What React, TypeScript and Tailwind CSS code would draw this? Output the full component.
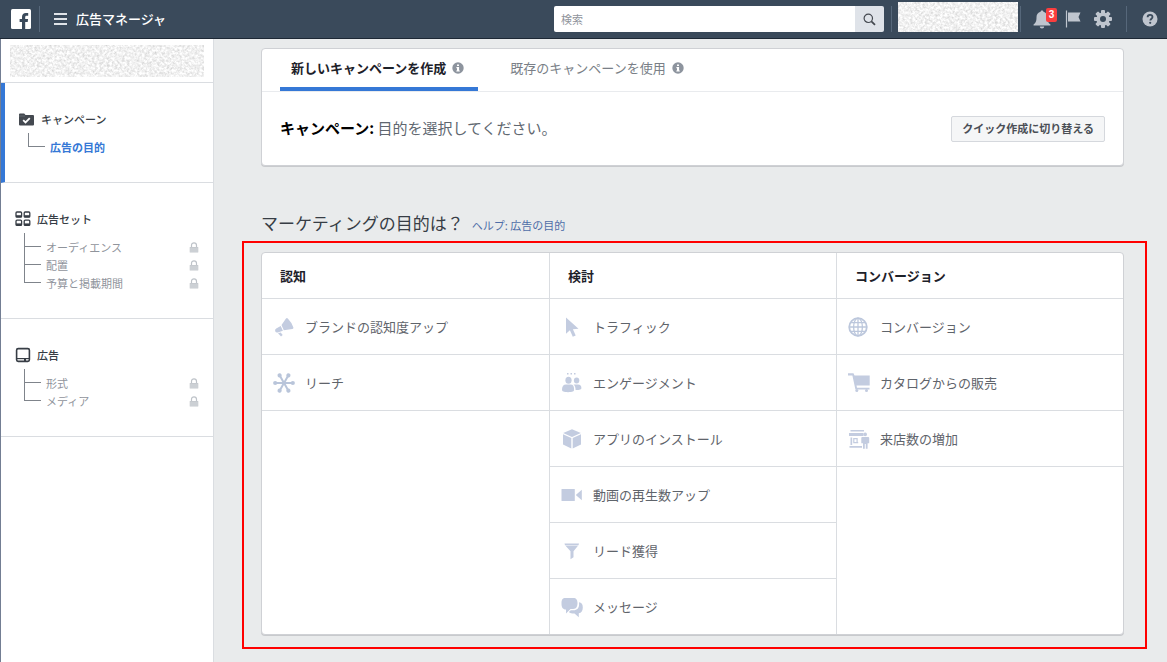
import React, { ReactNode } from 'react';

type SidebarItem = { label: string; locked?: boolean; active?: boolean };

type Objective = { label: string; icon: ReactNode };

const FacebookLogo = () => (
    <svg width="20" height="20" viewBox="0 0 20 20" aria-hidden="true">
        <rect width="20" height="20" rx="1.5" fill="#fff" />
        <path
            d="M11 20v-7H8.6v-2.9H11V8c0-2.6 1.5-4 3.9-4h2.3v2.8h-1.5c-1.2 0-1.5.6-1.5 1.5v1.8h2.9l-.4 2.9h-2.5v7z"
            fill="#3a4a5b"
        />
    </svg>
);

// Grainy block that covers private account names
const Redacted = ({ id, className }: { id: string; className: string }) => (
    <svg className={className} aria-hidden="true">
        <filter id={id} x="0" y="0" width="100%" height="100%">
            <feTurbulence type="fractalNoise" baseFrequency="0.4" numOctaves="3" seed="7" />
            <feColorMatrix type="matrix" values="-0.6 0 0 0 1.18  -0.6 0 0 0 1.18  -0.6 0 0 0 1.18  0 0 0 0 1" />
        </filter>
        <rect width="100%" height="100%" fill="#ececec" filter={`url(#${id})`} />
    </svg>
);

const InfoIcon = () => (
    <svg width="12" height="12" viewBox="0 0 12 12" aria-hidden="true">
        <circle cx="6" cy="6" r="5.7" fill="#8d949e" />
        <path d="M5 2.4h2v1.7H5zM4.4 5h2.7v3.4h.7v1.2H4.3V8.4H5V6.2h-.6z" fill="#fff" />
    </svg>
);

const LockIcon = () => (
    <svg width="10" height="11" viewBox="0 0 10 11" aria-hidden="true">
        <path d="M2.5 5.5V3.2a2.5 2.4 0 0 1 5 0v2.3" fill="none" stroke="#bec3c9" strokeWidth="1.2" />
        <rect x="0.7" y="5" width="8.6" height="5.6" rx="0.6" fill="#c5c9ce" />
        <path d="M1 7h8M1 9h8" stroke="#dadde1" strokeWidth="0.7" />
    </svg>
);

const FolderIcon = () => (
    <svg width="16" height="13" viewBox="0 0 16 13" aria-hidden="true">
        <path d="M0 1.5Q0 .4 1 .4h4.2l1.3 1.5H14q1 0 1 1V11.6q0 1-1 1H1q-1 0-1-1z" fill="#444950" />
        <path d="M0 3h6" stroke="#777c83" strokeWidth="0.6" />
        <path d="M4.2 7.2l2.3 2.2 4.3-4.3" fill="none" stroke="#fff" strokeWidth="1.8" />
    </svg>
);

const AdSetIcon = () => (
    <svg width="16" height="16" viewBox="0 0 16 16" fill="none" stroke="#373d45" strokeWidth="1.3" aria-hidden="true">
        {[[1, 1], [9.2, 1], [1, 9.2], [9.2, 9.2]].map(([x, y]) => (
            <g key={`${x}-${y}`}>
                <rect x={x} y={y} width="5.6" height="5.2" rx="1" />
                <path d={`M${x} ${y + 4.2}h5.6`} strokeWidth="2" />
            </g>
        ))}
    </svg>
);

const AdIcon = () => (
    <svg width="16" height="16" viewBox="0 0 16 16" fill="none" stroke="#373d45" aria-hidden="true">
        <rect x="1.6" y="1.6" width="12.8" height="12.8" rx="1.6" strokeWidth="1.6" />
        <path d="M1.6 11.6h12.8" strokeWidth="1.2" />
        <path d="M9 13h2" strokeWidth="2" />
    </svg>
);

const BellIcon = () => (
    <svg width="18" height="19" viewBox="0 0 18 19" fill="#bfc5ce" aria-hidden="true">
        <path d="M9 .4c.8 0 1.4.5 1.4 1.3 2.6.7 4.1 2.8 4.1 5.5 0 4.2.9 5.5 2.7 7.1.6.6.3 1.3-.5 1.3H1.3c-.8 0-1.1-.7-.5-1.3 1.8-1.6 2.7-2.9 2.7-7.1 0-2.7 1.5-4.8 4.1-5.5C7.6.9 8.2.4 9 .4z" />
        <path d="M6.8 16.5h4.4c0 1.2-.9 2-2.2 2s-2.2-.8-2.2-2z" />
    </svg>
);

const FlagIcon = () => (
    <svg width="16" height="18" viewBox="0 0 16 18" aria-hidden="true">
        <path d="M1.5.5v17" stroke="#bfc5ce" strokeWidth="1.2" />
        <path d="M3 2.5h12.5l-2 4.5 2 4.5H3z" fill="#bfc5ce" />
    </svg>
);

const GearIcon = () => (
    <svg width="18" height="18" viewBox="0 0 18 18" aria-hidden="true">
        <g fill="#bfc5ce">
            {[0, 45, 90, 135].map((angle) => (
                <rect key={angle} x="7" y="0" width="4" height="18" rx="1" transform={`rotate(${angle} 9 9)`} />
            ))}
            <circle cx="9" cy="9" r="6.6" />
        </g>
        <circle cx="9" cy="9" r="3" fill="#3a4a5b" />
    </svg>
);

const HelpIcon = () => (
    <svg width="16" height="16" viewBox="0 0 16 16" aria-hidden="true">
        <circle cx="8" cy="8" r="7.5" fill="#bfc5ce" />
        <path d="M5.6 6.3c0-1.5 1-2.4 2.4-2.4s2.5.8 2.5 2.2c0 1.6-2.2 1.7-2.2 3.5" fill="none" stroke="#3a4a5b" strokeWidth="1.8" />
        <circle cx="8.2" cy="11.8" r="1.1" fill="#3a4a5b" />
    </svg>
);

const SearchIcon = () => (
    <svg width="13" height="13" viewBox="0 0 13 13" fill="none" stroke="#444950" aria-hidden="true">
        <circle cx="5.3" cy="5.3" r="4.2" strokeWidth="1.2" />
        <path d="M8.4 8.4l3.6 3.4" strokeWidth="1.8" />
    </svg>
);

const ObjectiveIcon = ({ children }: { children: ReactNode }) => (
    <svg width="22" height="22" viewBox="0 0 22 22" fill="#c3cce0" className="shrink-0" aria-hidden="true">
        {children}
    </svg>
);

const REACH_ANGLES = [0, 60, 120, 180, 240, 300];

const columns: { title: string; objectives: Objective[] }[] = [
    {
        title: '認知',
        objectives: [
            {
                label: 'ブランドの認知度アップ',
                icon: (
                    <>
                        <path d="M8.5 9L13 2.5q.9-1.2 1.8 0 4 4 5.6 9 .2 1.4-1 1.5l-8.600 1.200z" />
                        <path d="M7.700 10l2.200 4.800-5 1.700q-2.100.4-2.700-1.200-.7-1.900 1-2.800z" />
                        <path d="M5 17.300l2.700-.9 2 2.700-1.700 1.400z" />
                    </>
                ),
            },
            {
                label: 'リーチ',
                icon: (
                    <g fill="#b9c5da">
                        {REACH_ANGLES.map((angle) => (
                            <g key={angle} transform={`rotate(${angle} 11 11)`}>
                                <path d="M11 10h8v2h-8z" />
                                <circle cx="19.8" cy="11" r="2.1" />
                            </g>
                        ))}
                    </g>
                ),
            },
        ],
    },
    {
        title: '検討',
        objectives: [
            {
                label: 'トラフィック',
                icon: <path d="M5 1.5v16.2l3.900-3.500 2.900 6.500 2.900-1.300-2.800-6.200 5.600-.4z" />,
            },
            {
                label: 'エンゲージメント',
                icon: (
                    <>
                        <path d="M6 1h1.500v1.500H6zM9.500 1H11v1.500H9.500zM13 1h1.500v1.500H13z" />
                        <ellipse cx="7.500" cy="8.200" rx="3.100" ry="3.500" />
                        <ellipse cx="15.600" cy="8.500" rx="2.700" ry="3" />
                        <path d="M1 17.800c0-3.600 1.500-5.300 4-5.300h4.600c2.500 0 3.500 1.700 3.500 5.300 0 1.700-1.500 2.400-6 2.400S1 19.500 1 17.800z" />
                        <path d="M12.500 12.500H17c2.400 0 3.400 1.500 3.400 3.500 0 1.500-1.300 2-5.800 2-.1-2.500-.5-4.300-2.100-5.500z" />
                    </>
                ),
            },
            {
                label: 'アプリのインストール',
                icon: (
                    <>
                        <path d="M11 1.2l8.800 3.700L11 9 2.200 4.900z" />
                        <path d="M2 6.200l8.300 3.900v10.500L2 16.400zM20 6.200l-8.300 3.900v10.500l8.300-4.200z" />
                    </>
                ),
            },
            {
                label: '動画の再生数アップ',
                icon: (
                    <>
                        <rect x="0.500" y="5" width="13.300" height="12" rx="0.500" />
                        <path d="M14.800 11l6-5.200v10.400z" />
                    </>
                ),
            },
            {
                label: 'リード獲得',
                icon: <path d="M3.500 3.500H18l-.5 1.700H4zM4.500 5.700H17l-4.500 5.600v6l-3 2v-8z" />,
            },
            {
                label: 'メッセージ',
                icon: (
                    <>
                        <path d="M4.500 2h7.700c3.200 0 4.300 2 4.300 5s-1.100 6-4.300 6H9.500L5 17.500v-3.900C1.600 13.200.5 11.500.5 7.500S1.500 2 4.500 2z" />
                        <path d="M18 6.300c2.600.4 3.800 2 3.800 5.200 0 3.500-1.400 5.300-4 5.700v4.100l-4.300-3.900h-2.200c-1.500 0-2.700-.4-3.500-1.300l2-1.900h2.700c3.600 0 5.600-2.300 5.600-6z" />
                    </>
                ),
            },
        ],
    },
    {
        title: 'コンバージョン',
        objectives: [
            {
                label: 'コンバージョン',
                icon: (
                    <g fill="none" stroke="#bcc7dc" strokeWidth="1.300">
                        <circle cx="10" cy="11" r="8.800" strokeWidth="1.800" />
                        <ellipse cx="10" cy="11" rx="4.400" ry="8.800" />
                        <path d="M10 2v18M1.500 11h17M2.500 6.700h15M2.500 15.300h15" />
                    </g>
                ),
            },
            {
                label: 'カタログからの販売',
                icon: (
                    <>
                        <path d="M0 1.200h5.500l1 2.300h15.200v10H8.500l.5 2.200h12.500v1.800H7.400L4.400 3.500H0z" />
                        <circle cx="8.800" cy="18.600" r="1.500" />
                        <circle cx="18.500" cy="18.600" r="1.500" />
                    </>
                ),
            },
            {
                label: '来店数の増加',
                icon: (
                    <>
                        <path d="M2.500 2H16v1.500H2.500zM1 5h14.500v3H1zM1.500 18h12.500v1.700H1.500z" />
                        <path d="M2.500 9.500h1.700V17H2.500zM5.200 10h4v1.200h-4zM5.200 11h1.200v3.500H5.200zM8.500 10h1.200v4.500H8.500zM5.200 14h5v1.300h-5z" />
                        <circle cx="17.200" cy="6.400" r="1.800" />
                        <path d="M14.200 9h6q1 0 1 1v5.200h-1.600v5.500h-1.800v-4.700h-1v4.700H15v-5.500h-1.700V10q0-1 .9-1z" />
                    </>
                ),
            },
        ],
    },
];

const SidebarSection = ({ title, icon, items, current }: {
    title: string;
    icon: ReactNode;
    items: SidebarItem[];
    current?: boolean;
}) => (
    <section
        className={`border-b border-[#dadde1] pt-[27px] pr-[14px] pb-[26px] pl-[14px] ${current ? 'border-l-4 border-l-[#3578d6]' : ''}`}
    >
        <h2 className="flex h-[18px] items-center gap-[6px] text-[11px] font-medium text-[#373d45]">
            {icon}
            {title}
        </h2>
        <div className="mt-[5px] ml-[9px] flex gap-[5px]">
            <div className="w-[17px]" aria-hidden="true">
                {items.map((item, i) => (
                    <div key={item.label} className={`border-b border-l border-[#7f848b] ${i === 0 ? 'h-[14px]' : 'h-[18px]'}`} />
                ))}
            </div>
            <ul className="mt-[5px] flex-1">
                {items.map((item) => (
                    <li key={item.label} className="flex h-[18px] items-center justify-between text-[11px]">
                        <a href="#" className={item.active ? 'font-bold text-[#3578d6]' : 'text-[#90949c]'}>
                            {item.label}
                        </a>
                        {item.locked && <LockIcon />}
                    </li>
                ))}
            </ul>
        </div>
    </section>
);

const Divider = ({ className }: { className: string }) => (
    <div className={`h-[26px] w-px shrink-0 bg-[#56677a] ${className}`} />
);

const TopBar = () => (
    <header className="flex h-[39px] items-center border-b border-[#1d2835] bg-[#3a4a5b] pr-[9px] pl-[11px]">
        <a href="#" aria-label="Facebook"><FacebookLogo /></a>
        <Divider className="mr-[14px] ml-2" />
        <button aria-label="メニュー" className="flex w-[13px] flex-col gap-[3px]">
            <span className="h-[2px] w-full bg-[#dfe3e8]" />
            <span className="h-[2px] w-full bg-[#dfe3e8]" />
            <span className="h-[2px] w-full bg-[#dfe3e8]" />
        </button>
        <h1 className="ml-[9px] text-[13px] font-medium text-white">広告マネージャ</h1>
        <form className="ml-auto flex h-[26px] w-[330px] overflow-hidden rounded-[2px]">
            <input
                type="text"
                aria-label="検索"
                placeholder="検索"
                className="min-w-0 flex-1 bg-white px-[7px] text-[11px] outline-none placeholder:text-[#90949c]"
            />
            <button type="button" aria-label="検索する" className="flex w-[29px] items-center justify-center bg-[#dfe3e9]">
                <SearchIcon />
            </button>
        </form>
        <Divider className="mr-[6px] ml-[7px]" />
        <Redacted id="grain-user" className="mt-[2px] h-[30px] w-[120px] shrink-0 self-start" />
        <Divider className="mr-3 ml-[2px]" />
        <button aria-label="お知らせ" className="relative">
            <BellIcon />
            <span className="absolute -top-[2px] left-[13px] flex h-[14px] w-[11px] items-center justify-center rounded-[2px] bg-[#fa3e3e] font-['Liberation_Sans',sans-serif] text-[10px] font-bold text-white">
                3
            </span>
        </button>
        <button aria-label="ページ" className="ml-[14px]"><FlagIcon /></button>
        <button aria-label="設定" className="ml-[13px]"><GearIcon /></button>
        <Divider className="mr-[15px] ml-[14px]" />
        <button aria-label="ヘルプ"><HelpIcon /></button>
    </header>
);

const Sidebar = () => (
    <nav className="w-[213px] shrink-0 border-l border-[#737e93] bg-white">
        <div className="border-b border-[#dadde1] px-[9px] pt-[6px] pb-[5px]">
            <Redacted id="grain-account" className="block h-8 w-full" />
        </div>
        <SidebarSection
            title="キャンペーン"
            icon={<FolderIcon />}
            items={[{ label: '広告の目的', active: true }]}
            current
        />
        <SidebarSection
            title="広告セット"
            icon={<AdSetIcon />}
            items={[
                { label: 'オーディエンス', locked: true },
                { label: '配置', locked: true },
                { label: '予算と掲載期間', locked: true },
            ]}
        />
        <SidebarSection
            title="広告"
            icon={<AdIcon />}
            items={[
                { label: '形式', locked: true },
                { label: 'メディア', locked: true },
            ]}
        />
    </nav>
);

const CampaignCard = () => (
    <section className="mr-[23px] ml-[19px] rounded border border-[#cfd1d5] bg-white shadow-[0_1px_0_#c8cacd]">
        <div role="tablist" className="flex h-[43px] items-stretch gap-[22px] border-b border-[#e9ebee] pl-[18px] text-[13px]">
            <button role="tab" aria-selected="true" className="flex items-center gap-[6px] border-b-4 border-[#3578d6] pr-[14px] pl-[11px] font-bold text-[#1d2129]">
                新しいキャンペーンを作成
                <InfoIcon />
            </button>
            <button role="tab" aria-selected="false" className="flex items-center gap-[6px] border-b-4 border-transparent pl-[10px] text-[#7a7f87]">
                既存のキャンペーンを使用
                <InfoIcon />
            </button>
        </div>
        <div className="flex h-[73px] items-center justify-between px-[18px]">
            <p className="text-[15px] text-[#606770]">
                <strong className="font-bold text-black">キャンペーン:</strong> 目的を選択してください。
            </p>
            <button className="h-[26px] rounded-[2px] border border-[#d5d8dd] bg-[#f5f6f7] px-[10px] text-[11px] font-bold text-[#4b4f56]">
                クイック作成に切り替える
            </button>
        </div>
    </section>
);

const ObjectivePicker = () => (
    <section className="mt-[3px] border-2 border-[#ff0000] pt-[9px] pr-[21px] pb-3 pl-[17px]">
        <div className="grid grid-cols-3 rounded border border-[#cfd1d5] bg-white shadow-[0_1px_0_#c8cacd]">
            {columns.map((column, i) => (
                <div key={column.title} className={i > 0 ? 'border-l border-[#dadde1]' : ''}>
                    <h3 className="flex h-[46px] items-center border-b border-[#dadde1] pl-[18px] text-[13px] font-bold text-[#1d2129]">
                        {column.title}
                    </h3>
                    {column.objectives.map((objective, j) => (
                        <button
                            key={objective.label}
                            className={`flex w-full items-center gap-[10px] pl-[11px] text-left text-[13px] text-[#5f646b] ${i === 1 && j === 5 ? 'h-[55px]' : 'h-14 border-b border-[#dadde1]'}`}
                        >
                            <ObjectiveIcon>{objective.icon}</ObjectiveIcon>
                            {objective.label}
                        </button>
                    ))}
                </div>
            ))}
        </div>
    </section>
);

const App = () => (
    <div className="flex min-h-screen flex-col bg-[#e9ebec] font-['Noto_Sans_CJK_JP',sans-serif]">
        <TopBar />
        <div className="flex flex-1">
            <Sidebar />
            <main className="min-w-0 flex-1 border-l border-[#dadde1] pt-[9px] pr-5 pb-[14px] pl-7">
                <CampaignCard />
                <div className="mt-11 ml-[19px] flex h-7 items-baseline gap-2">
                    <h2 className="text-[17px] text-[#373d45]">マーケティングの目的は？</h2>
                    <a href="#" className="text-[11px] text-[#4f6ea8]">ヘルプ: 広告の目的</a>
                </div>
                <ObjectivePicker />
            </main>
        </div>
    </div>
);

export default App;
